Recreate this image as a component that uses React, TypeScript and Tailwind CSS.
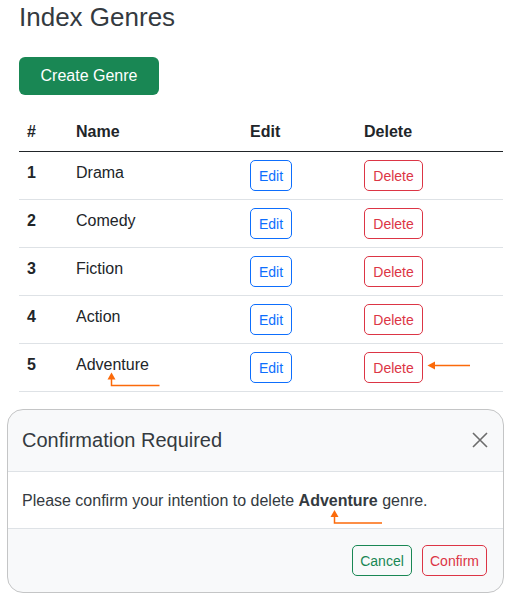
import React from "react";

const genres = [
  { id: 1, name: "Drama" },
  { id: 2, name: "Comedy" },
  { id: 3, name: "Fiction" },
  { id: 4, name: "Action" },
  { id: 5, name: "Adventure" },
];

function Arrows() {
  // annotation arrows drawn on top of the page
  return (
    <svg
      className="absolute left-0 top-0 pointer-events-none"
      width={515}
      height={600}
      viewBox="0 0 515 600"
    >
      <g stroke="#fb6a0a" strokeWidth={1.5} fill="none">
        <path d="M111.5 378 V385.5 H159.5" />
        <path d="M434 365.5 H470" />
        <path d="M334.5 515 V523 H382" />
      </g>
      <g fill="#fb6a0a">
        <polygon points="111.5,372.5 107.5,379.5 115.5,379.5" />
        <polygon points="427.5,365.5 435,361.5 435,369.5" />
        <polygon points="334.5,510 330.5,517 338.5,517" />
      </g>
    </svg>
  );
}

export default function App() {
  return (
    <div className="relative w-[515px] h-[600px] bg-white text-[#212529] font-['Liberation_Sans',Arial,sans-serif] overflow-hidden">
      <div className="pl-[19px] pr-[12px]">
        <h2 className="pt-[2px] text-[26px] leading-[31px] font-normal text-[#343a40]">Index Genres</h2>
        <button className="mt-[24px] w-[140px] h-[38px] rounded-[6px] bg-[#198754] text-white text-[16px] leading-6">
          Create Genre
        </button>

        <div className="mt-4 text-[16px] leading-6">
          <div className="grid grid-cols-[49px_174px_114px_1fr] border-b border-[#212529] font-bold">
            <div className="pt-[9px] pb-[7px] px-2">#</div>
            <div className="pt-[9px] pb-[7px] px-2">Name</div>
            <div className="pt-[9px] pb-[7px] px-2">Edit</div>
            <div className="pt-[9px] pb-[7px] px-2">Delete</div>
          </div>
          {genres.map((g) => (
            <div
              key={g.id}
              className="grid grid-cols-[49px_174px_114px_1fr] border-b border-[#dee2e6]"
            >
              <div className="pt-[9px] px-2 font-bold">{g.id}</div>
              <div className="pt-[9px] px-2">{g.name}</div>
              <div className="p-2">
                <button className="h-[31px] px-2 pt-[1px] border border-[#0d6efd] text-[#0d6efd] rounded-[5px] text-[14px] leading-[21px]">
                  Edit
                </button>
              </div>
              <div className="p-2">
                <button className="h-[31px] w-[59px] pt-[1px] border border-[#dc3545] text-[#dc3545] rounded-[5px] text-[14px] leading-[21px]">
                  Delete
                </button>
              </div>
            </div>
          ))}
        </div>
      </div>

      <div className="ml-[7px] mt-[17px] w-[497px] border border-[#c4c5c6] rounded-[16px] overflow-hidden bg-[#f8f9fa]">
        <div className="flex items-center justify-between pl-[14px] pr-[15px] pt-[15px] pb-4 border-b border-[#dee2e6]">
          <h5 className="text-[20px] leading-[30px] text-[#343a40]">Confirmation Required</h5>
          <svg width={16} height={16} viewBox="0 0 16 16">
            <path d="M1 1 L15 15 M15 1 L1 15" stroke="#6c6c6c" strokeWidth={1.6} />
          </svg>
        </div>
        <div className="bg-white px-[14px] pt-[17px] pb-[15px] border-b border-[#dee2e6] text-[16px] leading-6 text-[#343a40]">
          Please confirm your intention to delete <strong>Adventure</strong> genre.
        </div>
        <div className="flex justify-end gap-[10px] pr-4 py-4">
          <button className="h-[31px] w-[60px] pt-[1px] border border-[#198754] text-[#198754] rounded-[5px] text-[14px] leading-[21px]">
            Cancel
          </button>
          <button className="h-[31px] w-[65px] pt-[1px] border border-[#dc3545] text-[#dc3545] rounded-[5px] text-[14px] leading-[21px]">
            Confirm
          </button>
        </div>
      </div>

      <Arrows />
    </div>
  );
}
